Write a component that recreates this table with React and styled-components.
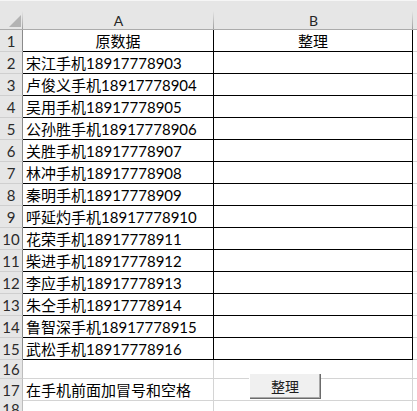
import React from "react";
import styled, { createGlobalStyle } from "styled-components";

const GlobalStyle = createGlobalStyle`
  html, body {
    margin: 0;
    padding: 0;
    background: #fff;
  }
  body {
    font-family: Lato, "Noto Sans CJK SC", sans-serif;
  }
`;

const COLS = "23px 191px 199px 1fr";
const GRID = "#d4d4d4";

const Sheet = styled.div`
  position: relative;
  width: 417px;
  height: 411px;
  overflow: hidden;
  background: #fff;
`;

const TopStrip = styled.div`
  height: 10px;
  background: #e6e6e6;
  border-top: 1px solid #f6f6f6;
`;

const HeaderRow = styled.div`
  display: grid;
  grid-template-columns: ${COLS};
  height: 19px;
  box-sizing: border-box;
  background: #e6e6e6;
  border-bottom: 1px solid #ababab;
`;

const Corner = styled.div`
  display: flex;
  align-items: flex-end;
  justify-content: flex-end;
  padding: 0 2px 2px 0;
  background-image: linear-gradient(to bottom, #e6e6e6, #9e9e9e);
  background-size: 1px 100%;
  background-position: right top;
  background-repeat: no-repeat;
`;

const ColHead = styled.div`
  display: flex;
  align-items: center;
  justify-content: center;
  font-size: 14px;
  color: #262626;
  background-image: ${(p) =>
    p.$edge ? "linear-gradient(to bottom, #e6e6e6, #9e9e9e)" : "none"};
  background-size: 1px 100%;
  background-position: right top;
  background-repeat: no-repeat;
`;

const Row = styled.div`
  display: grid;
  grid-template-columns: ${COLS};
  height: ${(p) => p.$h}px;
`;

const RowHead = styled.div`
  box-sizing: border-box;
  display: flex;
  align-items: center;
  justify-content: center;
  background: #e6e6e6;
  border-right: 1px solid ${(p) => (p.$boxed ? "#8a8a8a" : "#bdbdbd")};
  border-bottom: 1px solid #cfcfcf;
  font-size: 15px;
  color: #2b2b2b;
`;

const Cell = styled.div`
  box-sizing: border-box;
  display: flex;
  align-items: center;
  justify-content: ${(p) => (p.$center ? "center" : "flex-start")};
  padding-left: ${(p) => (p.$center ? 0 : 3)}px;
  border-right: 1px solid ${(p) => (p.$boxed ? "#000" : GRID)};
  border-bottom: 1px solid ${(p) => (p.$boxed ? "#000" : GRID)};
  font-size: 15px;
  color: #000;
  white-space: nowrap;
`;

const Tail = styled.div`
  border-bottom: 1px solid ${GRID};
`;

const Button = styled.button`
  position: absolute;
  left: 249px;
  top: 373px;
  width: 72px;
  height: 26px;
  padding: 0;
  border: none;
  background: #f0f0f0;
  box-shadow: inset 1px 1px #ffffff, inset -1px -1px #6b6b6b,
    inset -2px -2px #a8a8a8;
  font-family: "Noto Sans CJK SC", sans-serif;
  font-size: 14px;
  color: #1e1e1e;
`;

const names = [
  "宋江", "卢俊义", "吴用", "公孙胜", "关胜", "林冲", "秦明",
  "呼延灼", "花荣", "柴进", "李应", "朱仝", "鲁智深", "武松",
];

const App = () => {
  return (
    <Sheet>
      <GlobalStyle />
      <TopStrip />
      <HeaderRow>
        <Corner>
          <svg width="13" height="12" viewBox="0 0 13 12">
            <polygon points="13,0 13,12 1,12" fill="#b3b3b3" />
          </svg>
        </Corner>
        <ColHead $edge>A</ColHead>
        <ColHead $edge>B</ColHead>
        <ColHead />
      </HeaderRow>

      <Row $h={22}>
        <RowHead $boxed>1</RowHead>
        <Cell $boxed $center>原数据</Cell>
        <Cell $boxed $center>整理</Cell>
        <Tail />
      </Row>
      {names.map((n, i) => (
        <Row $h={22} key={n}>
          <RowHead $boxed>{i + 2}</RowHead>
          <Cell $boxed>
            {n}手机{18917778903 + i}
          </Cell>
          <Cell $boxed />
          <Tail />
        </Row>
      ))}
      <Row $h={19}>
        <RowHead>16</RowHead>
        <Cell />
        <Cell />
        <Tail />
      </Row>
      <Row $h={20}>
        <RowHead>17</RowHead>
        <Cell>在手机前面加冒号和空格</Cell>
        <Cell />
        <Tail />
      </Row>
      <Row $h={20}>
        <RowHead>18</RowHead>
        <Cell />
        <Cell />
        <Tail />
      </Row>

      <Button>整理</Button>
    </Sheet>
  );
};

export default App;
